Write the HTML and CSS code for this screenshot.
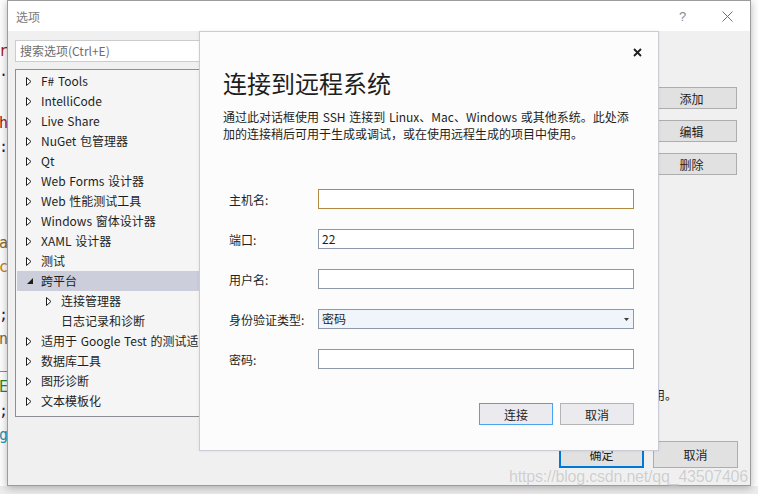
FILE: index.html
```html
<!DOCTYPE html>
<html lang="zh-CN">
<head>
<meta charset="utf-8">
<title>选项 - 连接到远程系统</title>
<link rel="stylesheet" href="styles.css">
</head>
<body>
<div class="desktop">
  <div class="editor">
    <div class="ln c-red">r</div>
    <div class="ln c-dark">·</div>
    <div class="ln"></div>
    <div class="ln c-red">h</div>
    <div class="ln c-dark">:</div>
    <div class="ln"></div>
    <div class="ln"></div>
    <div class="ln"></div>
    <div class="ln c-brown">a</div>
    <div class="ln c-orange">c</div>
    <div class="ln"></div>
    <div class="ln c-dark">;</div>
    <div class="ln c-brown">n</div>
    <div class="ln c-dark">_</div>
    <div class="ln c-green">E</div>
    <div class="ln c-dark">;</div>
    <div class="ln c-teal">g</div>
  </div>

  <div class="window">
    <div class="titlebar">
      <span class="wtitle">选项</span>
      <span class="tb-help">?</span>
      <span class="tb-close">
        <svg width="11" height="11" viewBox="0 0 11 11"><path d="M0.5 0.5 L10.5 10.5 M10.5 0.5 L0.5 10.5" stroke="#6f6f6f" stroke-width="1" fill="none"/></svg>
      </span>
    </div>
    <div class="wbody">
      <div class="wmain">
        <div class="leftcol">
          <div class="search">搜索选项(Ctrl+E)</div>
          <div class="tree">
            <div class="row"><span class="tw"><svg width="6" height="9" viewBox="0 0 6 9"><polygon points="0.5,0.5 5,4.5 0.5,8.5" fill="#fff" stroke="#1e1e1e" stroke-width="1"/></svg></span><span class="lbl">F# Tools</span></div>
            <div class="row"><span class="tw"><svg width="6" height="9" viewBox="0 0 6 9"><polygon points="0.5,0.5 5,4.5 0.5,8.5" fill="#fff" stroke="#1e1e1e" stroke-width="1"/></svg></span><span class="lbl">IntelliCode</span></div>
            <div class="row"><span class="tw"><svg width="6" height="9" viewBox="0 0 6 9"><polygon points="0.5,0.5 5,4.5 0.5,8.5" fill="#fff" stroke="#1e1e1e" stroke-width="1"/></svg></span><span class="lbl">Live Share</span></div>
            <div class="row"><span class="tw"><svg width="6" height="9" viewBox="0 0 6 9"><polygon points="0.5,0.5 5,4.5 0.5,8.5" fill="#fff" stroke="#1e1e1e" stroke-width="1"/></svg></span><span class="lbl">NuGet 包管理器</span></div>
            <div class="row"><span class="tw"><svg width="6" height="9" viewBox="0 0 6 9"><polygon points="0.5,0.5 5,4.5 0.5,8.5" fill="#fff" stroke="#1e1e1e" stroke-width="1"/></svg></span><span class="lbl">Qt</span></div>
            <div class="row"><span class="tw"><svg width="6" height="9" viewBox="0 0 6 9"><polygon points="0.5,0.5 5,4.5 0.5,8.5" fill="#fff" stroke="#1e1e1e" stroke-width="1"/></svg></span><span class="lbl">Web Forms 设计器</span></div>
            <div class="row"><span class="tw"><svg width="6" height="9" viewBox="0 0 6 9"><polygon points="0.5,0.5 5,4.5 0.5,8.5" fill="#fff" stroke="#1e1e1e" stroke-width="1"/></svg></span><span class="lbl">Web 性能测试工具</span></div>
            <div class="row"><span class="tw"><svg width="6" height="9" viewBox="0 0 6 9"><polygon points="0.5,0.5 5,4.5 0.5,8.5" fill="#fff" stroke="#1e1e1e" stroke-width="1"/></svg></span><span class="lbl">Windows 窗体设计器</span></div>
            <div class="row"><span class="tw"><svg width="6" height="9" viewBox="0 0 6 9"><polygon points="0.5,0.5 5,4.5 0.5,8.5" fill="#fff" stroke="#1e1e1e" stroke-width="1"/></svg></span><span class="lbl">XAML 设计器</span></div>
            <div class="row"><span class="tw"><svg width="6" height="9" viewBox="0 0 6 9"><polygon points="0.5,0.5 5,4.5 0.5,8.5" fill="#fff" stroke="#1e1e1e" stroke-width="1"/></svg></span><span class="lbl">测试</span></div>
            <div class="row selected"><span class="tw"><svg width="6" height="6" viewBox="0 0 6 6"><polygon points="6,0 6,6 0,6" fill="#1e1e1e"/></svg></span><span class="lbl">跨平台</span></div>
            <div class="row child"><span class="tw"><svg width="6" height="9" viewBox="0 0 6 9"><polygon points="0.5,0.5 5,4.5 0.5,8.5" fill="#fff" stroke="#1e1e1e" stroke-width="1"/></svg></span><span class="lbl">连接管理器</span></div>
            <div class="row child"><span class="tw"></span><span class="lbl">日志记录和诊断</span></div>
            <div class="row"><span class="tw"><svg width="6" height="9" viewBox="0 0 6 9"><polygon points="0.5,0.5 5,4.5 0.5,8.5" fill="#fff" stroke="#1e1e1e" stroke-width="1"/></svg></span><span class="lbl">适用于 Google Test 的测试适配器</span></div>
            <div class="row"><span class="tw"><svg width="6" height="9" viewBox="0 0 6 9"><polygon points="0.5,0.5 5,4.5 0.5,8.5" fill="#fff" stroke="#1e1e1e" stroke-width="1"/></svg></span><span class="lbl">数据库工具</span></div>
            <div class="row"><span class="tw"><svg width="6" height="9" viewBox="0 0 6 9"><polygon points="0.5,0.5 5,4.5 0.5,8.5" fill="#fff" stroke="#1e1e1e" stroke-width="1"/></svg></span><span class="lbl">图形诊断</span></div>
            <div class="row"><span class="tw"><svg width="6" height="9" viewBox="0 0 6 9"><polygon points="0.5,0.5 5,4.5 0.5,8.5" fill="#fff" stroke="#1e1e1e" stroke-width="1"/></svg></span><span class="lbl">文本模板化</span></div>
          </div>
        </div>
        <div class="rightcol">
          <div class="sidebtns">
            <div class="wbtn side">添加</div>
            <div class="wbtn side">编辑</div>
            <div class="wbtn side">删除</div>
          </div>
          <div class="note">可在使用远程生成的项目中使用。</div>
        </div>
      </div>
      <div class="footer">
        <div class="wbtn foot ok">确定</div>
        <div class="wbtn foot">取消</div>
      </div>
    </div>
  </div>

  <div class="watermark">https://blog.csdn.net/qq_43507406</div>

  <div class="dialog">
    <div class="dlg-top">
      <svg class="dlg-x" width="9" height="9" viewBox="0 0 9 9"><path d="M1 1 L8 8 M8 1 L1 8" stroke="#1e1e1e" stroke-width="1.8" fill="none"/></svg>
    </div>
    <div class="dlg-title">连接到远程系统</div>
    <div class="dlg-desc">
      <span class="dl">通过此对话框使用 SSH 连接到 Linux、Mac、Windows 或其他系统。此处添</span>
      <span class="dl">加的连接稍后可用于生成或调试，或在使用远程生成的项目中使用。</span>
    </div>
    <div class="form">
      <div class="frow"><span class="flabel">主机名:</span><div class="field focus"></div></div>
      <div class="frow"><span class="flabel">端口:</span><div class="field">22</div></div>
      <div class="frow"><span class="flabel">用户名:</span><div class="field"></div></div>
      <div class="frow"><span class="flabel">身份验证类型:</span><div class="field select"><span>密码</span><svg width="5" height="3" viewBox="0 0 5 3"><polygon points="0,0 5,0 2.5,3" fill="#3a3a3a"/></svg></div></div>
      <div class="frow"><span class="flabel">密码:</span><div class="field"></div></div>
    </div>
    <div class="dlg-btns">
      <div class="dbtn primary">连接</div>
      <div class="dbtn">取消</div>
    </div>
  </div>
</div>
</body>
</html>
```

FILE: styles.css
```css
* { box-sizing: border-box; }
html, body {
  margin: 0;
  padding: 0;
}
body {
  width: 758px;
  height: 494px;
  overflow: hidden;
  background: #f2f2f2;
  font-family: "Noto Sans CJK SC", "Noto Sans", sans-serif;
  font-size: 12px;
  color: #1e1e1e;
}
.desktop {
  position: relative;
  width: 758px;
  height: 494px;
  background: linear-gradient(#fdfdfd, #fdfdfd) no-repeat 0 0 / 760px 486px, #ececec;
}

/* background code editor strip */
.editor {
  width: 20px;
  padding-top: 39px;
  margin-left: -1px;
  font-family: "DejaVu Sans Mono", monospace;
  font-size: 15px;
  overflow: hidden;
}
.ln { height: 24px; line-height: 24px; }
.c-red { color: #a31515; }
.c-dark { color: #1e1e5a; }
.c-brown { color: #8a6b2e; }
.c-orange { color: #c27c0e; }
.c-green { color: #1f8a1f; }
.c-teal { color: #2b91af; }

/* options window */
.window {
  position: absolute;
  left: 7px;
  top: 0;
  width: 744px;
  height: 486px;
  border: 1px solid #9c9c9c;
  background: #f0f0f0;
  box-shadow: 0 2px 8px rgba(0, 0, 0, 0.28);
  display: flex;
  flex-direction: column;
}
.titlebar {
  height: 30px;
  background: #ffffff;
  display: flex;
  align-items: center;
  padding-left: 8px;
}
.wtitle { color: #7a7a7a; flex: 1; }
.tb-help {
  color: #8a8a8a;
  font-size: 13px;
  width: 12px;
  margin-right: 31px;
  font-family: "Liberation Sans", sans-serif;
}
.tb-close {
  display: flex;
  margin-right: 17px;
}
.wbody {
  flex: 1;
  display: flex;
  flex-direction: column;
  padding: 9px 12px 17px 7px;
}
.wmain {
  display: flex;
  align-items: flex-start;
}
.leftcol {
  width: 240px;
  display: flex;
  flex-direction: column;
}
.search {
  height: 22px;
  background: #ffffff;
  border: 1px solid #cccccc;
  color: #6d6d6d;
  padding-left: 4px;
  line-height: 20px;
  white-space: nowrap;
}
.tree {
  margin-top: 7px;
  height: 348px;
  background: #f5f5f5;
  border: 1px solid #8e8e94;
  padding: 1px 1px 0 1px;
  overflow: hidden;
}
.row {
  height: 20px;
  display: flex;
  align-items: center;
  padding-left: 9px;
  white-space: nowrap;
}
.row.child { padding-left: 29px; }
.row.selected { background: #cccedb; }
.lbl { margin-top: -2px; word-spacing: 1px; }
.tw {
  width: 15px;
  flex: none;
  display: flex;
  align-items: center;
}
.row.selected .tw { padding-left: 1px; }

.rightcol {
  flex: 1;
  display: flex;
  flex-direction: column;
}
.sidebtns {
  align-self: flex-end;
  margin-top: 47px;
  margin-right: 1px;
  display: flex;
  flex-direction: column;
  gap: 11px;
}
.wbtn {
  background: #e1e1e1;
  border: 1px solid #adadad;
  display: flex;
  align-items: center;
  justify-content: center;
  color: #1e1e1e;
}
.wbtn.side { width: 91px; height: 22px; }
.note {
  margin-top: 211px;
  margin-right: 61px;
  text-align: right;
  line-height: 17px;
  white-space: nowrap;
}
.footer {
  margin-top: auto;
  display: flex;
  justify-content: flex-end;
  gap: 9px;
}
.wbtn.foot { width: 85px; height: 27px; }
.wbtn.ok { border: 2px solid #0078d7; }

.watermark {
  position: absolute;
  right: 10px;
  top: 467px;
  font-family: "Liberation Sans", sans-serif;
  font-size: 16px;
  letter-spacing: -0.2px;
  line-height: 20px;
  color: rgba(160, 160, 160, 0.5);
  text-shadow: 0 0 1px rgba(255, 255, 255, 0.9);
  white-space: nowrap;
}

/* connect dialog */
.dialog {
  position: absolute;
  left: 199px;
  top: 31px;
  width: 460px;
  height: 420px;
  background: #fcfcfc;
  border: 1px solid #cbcbd8;
  box-shadow: 0 0 3px rgba(0, 0, 0, 0.08);
  display: flex;
  flex-direction: column;
}
.dlg-top {
  display: flex;
  justify-content: flex-end;
  padding: 16px 16px 0 0;
  height: 25px;
}
.dlg-title {
  margin-top: 10px;
  padding-left: 23px;
  font-size: 24px;
  line-height: 32px;
  color: #1e1e1e;
}
.dlg-desc {
  margin-top: 9px;
  padding-left: 23px;
  line-height: 17px;
  word-spacing: 1px;
}
.dl { display: block; white-space: nowrap; }
.form {
  margin-top: 47px;
  padding-left: 29px;
  display: flex;
  flex-direction: column;
  gap: 20px;
}
.frow {
  display: flex;
  align-items: center;
  height: 20px;
}
.flabel { width: 89px; flex: none; }
.field {
  width: 316px;
  height: 20px;
  border: 1px solid #8d99ab;
  background: #ffffff;
  padding-left: 3px;
  line-height: 18px;
  display: flex;
  align-items: center;
  justify-content: space-between;
}
.field.focus { border-color: #b08a3e; }
.field.select {
  background: #f0f4fb;
  padding-right: 4px;
}
.dlg-btns {
  margin-top: 34px;
  padding-right: 24px;
  display: flex;
  justify-content: flex-end;
  gap: 7px;
}
.dbtn {
  width: 74px;
  height: 22px;
  background: #ebebef;
  border: 1px solid #b4b4b4;
  display: flex;
  align-items: center;
  justify-content: center;
}
.dbtn.primary { border-color: #4aa3f0; }
```
